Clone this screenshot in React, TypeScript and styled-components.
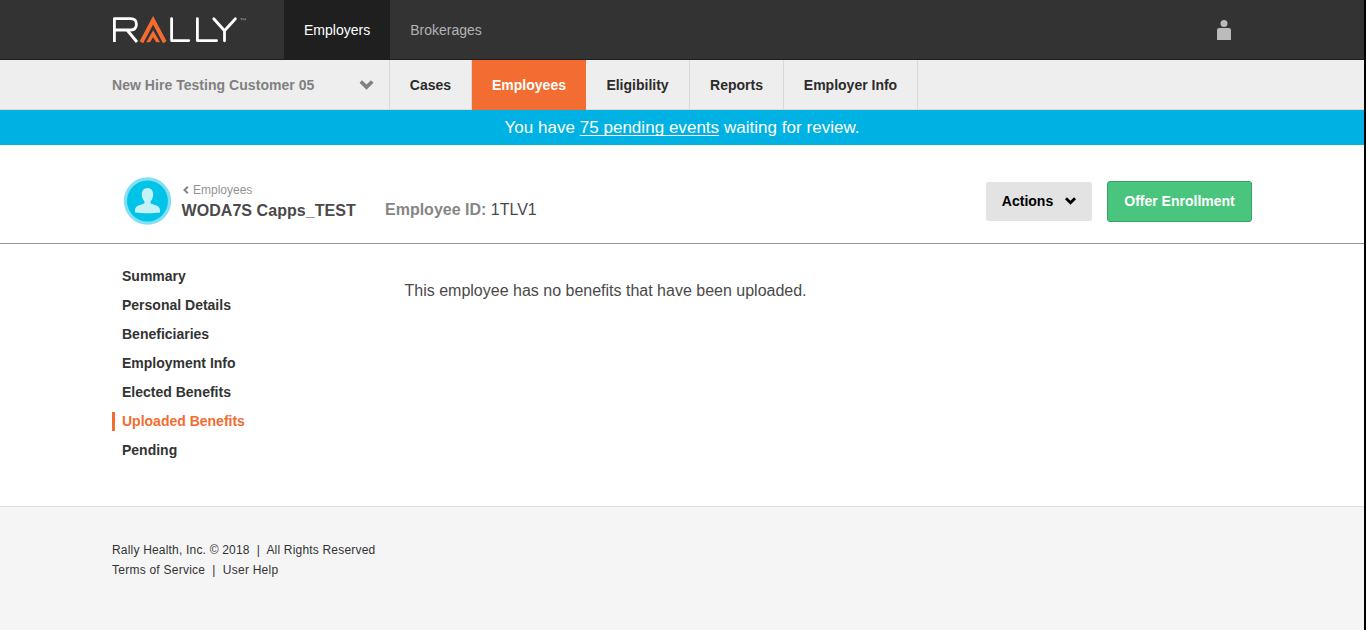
import React from "react";
import styled, { createGlobalStyle } from "styled-components";

const GlobalStyle = createGlobalStyle`
  *, *::before, *::after { box-sizing: border-box; }
  body {
    margin: 0;
    background: #fff;
    color: #333;
    font-family: "Liberation Sans", Arial, Helvetica, sans-serif;
    font-size: 14px;
  }
  a { color: inherit; text-decoration: none; }
  svg { display: block; }
`;

const Page = styled.div`
  display: flex;
  flex-direction: column;
  height: 630px;
  border-right: 2px solid #000;
  overflow: hidden;
`;

const TopBar = styled.header`
  display: flex;
  flex: none;
  height: 60px;
  padding-left: 112px;
  background: #333;
  border-bottom: 1px solid #1f1f1f;
`;

const Brand = styled.a`
  width: 172px;
  padding-top: 16px;
`;

const TopLink = styled.a<{ $active?: boolean }>`
  padding: 0 20px;
  line-height: 60px;
  color: ${(p) => (p.$active ? "#fff" : "#b4b4b4")};
  background: ${(p) => (p.$active ? "#1f1f1f" : "transparent")};
`;

const Account = styled.a`
  margin: 20px 133px 0 auto;
`;

const SubNav = styled.nav`
  display: flex;
  flex: none;
  height: 50px;
  padding-left: 112px;
  background: #eee;
  box-shadow: inset 0 -1px #dcdcdc;
  font-weight: bold;
  line-height: 51px;
`;

const CustomerPicker = styled.div`
  display: flex;
  justify-content: space-between;
  align-items: center;
  width: 278px;
  padding-right: 15px;
  border-right: 1px solid #d8d8d8;
  color: #808080;
  letter-spacing: 0.04px;
`;

const Tab = styled.a<{ $active?: boolean; $width: number }>`
  width: ${(p) => p.$width}px;
  text-align: center;
  color: ${(p) => (p.$active ? "#fff" : "#2b2b2b")};
  background: ${(p) => (p.$active ? "#f36c32" : "transparent")};
  border-right: ${(p) => (p.$active ? "0" : "1px solid #d8d8d8")};
`;

const Banner = styled.div`
  flex: none;
  height: 35px;
  background: #00b2e3;
  color: #fff;
  font-size: 17px;
  letter-spacing: 0.03px;
  line-height: 35px;
  text-align: center;

  a { text-decoration: underline; text-decoration-thickness: 1px; text-underline-offset: 2px; text-decoration-skip-ink: none; }
`;

const EmployeeHeader = styled.section`
  display: flex;
  flex: none;
  height: 99px;
  padding: 32px 112px 0 123px;
  border-bottom: 1px solid #949494;
`;

const Identity = styled.div`
  width: 214px;
  padding: 5px 0 0 10px;
`;

const BackLink = styled.a`
  display: flex;
  align-items: center;
  gap: 4px;
  height: 16px;
  padding-left: 2px;
  color: #949494;
  font-size: 12px;
`;

const EmployeeName = styled.h1`
  margin: 0;
  padding: 3px 0 0 0.5px;
  color: #4a4a4a;
  font-size: 16px;
  letter-spacing: 0.06px;
  line-height: 20px;
  white-space: nowrap;
`;

const EmployeeId = styled.div`
  padding-top: 23px;
  color: #4a4a4a;
  font-size: 16px;
  line-height: 20px;

  b { color: #868686; }
`;

const HeaderActions = styled.div`
  display: flex;
  align-items: flex-start;
  gap: 15px;
  margin-left: auto;
  padding-top: 4px;
`;

const Button = styled.button<{ $primary?: boolean }>`
  display: flex;
  align-items: center;
  justify-content: center;
  gap: 12px;
  width: ${(p) => (p.$primary ? 145 : 106)}px;
  height: ${(p) => (p.$primary ? 41 : 39)}px;
  margin-top: ${(p) => (p.$primary ? 0 : 1)}px;
  padding: 0 0 2px;
  border: ${(p) => (p.$primary ? "1px solid #36a365" : "0")};
  border-radius: 3px;
  background: ${(p) => (p.$primary ? "#4ac57e" : "#e3e3e3")};
  color: ${(p) => (p.$primary ? "#fff" : "#000")};
  font: bold 14px "Liberation Sans", Arial, sans-serif;
`;

const Content = styled.main`
  display: flex;
  flex: none;
  height: 262px;
  padding: 23px 112px 0;
`;

const SideNav = styled.nav`
  display: flex;
  flex-direction: column;
  gap: 10px;
  width: 292.5px;
`;

const SideLink = styled.a<{ $active?: boolean }>`
  height: 19px;
  padding-left: 7px;
  border-left: 3px solid ${(p) => (p.$active ? "#f36c32" : "transparent")};
  color: ${(p) => (p.$active ? "#f36c32" : "#333")};
  font-weight: bold;
  line-height: 19px;
`;

const Message = styled.p`
  margin: 14px 0 0;
  color: #4a4a4a;
  font-size: 16px;
  line-height: 20px;
`;

const Footer = styled.footer`
  flex: 1;
  padding: 33px 112px 0;
  background: #f5f5f5;
  border-top: 1px solid #dedede;
  color: #333;
  font-size: 12px;
  line-height: 20px;
  white-space: pre;
`;

const FooterLine = styled.div<{ $tracking: number }>`
  letter-spacing: ${(p) => p.$tracking}px;
`;

const Chevron = ({ width, height }: { width: number; height: number }) => (
  <svg width={width} height={height} viewBox="0 0 14 10">
    <path d="M0 2.8 2.5 0.3 7 4.6 11.5 0.3 14 2.8 7 9.7Z" fill="currentColor" />
  </svg>
);

const RallyLogo = () => (
  <svg width="136" height="28" viewBox="0 0 136 28" fill="none">
    <g stroke="#fff" strokeWidth="2.8" strokeLinejoin="round">
      <path d="M2.4 26V2.7H18.5C23 2.700 24.400 4.700 24.400 8.300S23 14 18.500 14H2.400M15 14 25 26" />
      <path d="M59.600 2.600V24.600H76.800M85.400 2.600V24.600H104.600" strokeLinecap="round" />
      <path d="M101.800 2.800 112.500 14.800 123.400 2.800M112.500 14.800V24.800" strokeLinecap="round" />
    </g>
    <path d="M29.400 26.200 41.100 4.200 52.800 26.200" stroke="#f36c32" strokeWidth="4" />
    <path d="M34.300 26.200 41.100 14.200 48 26.200H44.300L41.100 21.300 38 26.200Z" fill="#f36c32" />
    <path d="M128.500 2.600H130.700M129.600 2.600V4.200M131.800 4.200V2.600L132.600 3.600 133.400 2.600V4.200" stroke="#999" strokeWidth=".7" />
  </svg>
);

const PersonIcon = () => (
  <svg width="14" height="20" viewBox="0 0 14 20" fill="#bbb">
    <circle cx="7" cy="3.5" r="3.5" />
    <path d="M0 20V10.2Q0 8 2.2 8H11.8Q14 8 14 10.2V20Z" />
  </svg>
);

const Avatar = () => (
  <svg width="48" height="48" viewBox="0 0 48 48">
    <circle cx="24.500" cy="24" r="23.700" fill="#80dff2" />
    <circle cx="24.500" cy="24" r="20.500" fill="#00c3e8" />
    <path
      d="M24.500 11C28.200 11 30.200 13.800 30.200 17.300 30.200 20.500 29 23 27.600 24.200V26.600C32.500 28.400 37 28.700 37 33.500V35.500C30 36.500 19 36.500 12 35.500V33.500C12 28.700 16.500 28.400 21.400 26.600V24.200C20 23 18.800 20.500 18.800 17.300 18.800 13.800 20.800 11 24.500 11Z"
      fill="#c5f1f9"
    />
  </svg>
);

const BackIcon = () => (
  <svg width="6" height="8" viewBox="0 0 6 8" fill="none">
    <path d="M4.800.8 1.500 4 4.800 7.200" stroke="#868686" strokeWidth="2" />
  </svg>
);

const tabs = [
  { label: "Cases", width: 82 },
  { label: "Employees", width: 114, active: true },
  { label: "Eligibility", width: 104 },
  { label: "Reports", width: 94 },
  { label: "Employer Info", width: 134 },
];

const sections = [
  "Summary",
  "Personal Details",
  "Beneficiaries",
  "Employment Info",
  "Elected Benefits",
  "Uploaded Benefits",
  "Pending",
];

export default function App() {
  return (
    <>
      <GlobalStyle />
      <Page>
        <TopBar>
          <Brand aria-label="Rally"><RallyLogo /></Brand>
          <TopLink $active>Employers</TopLink>
          <TopLink>Brokerages</TopLink>
          <Account aria-label="Account"><PersonIcon /></Account>
        </TopBar>
        <SubNav>
          <CustomerPicker>
            New Hire Testing Customer 05
            <Chevron width={15} height={10} />
          </CustomerPicker>
          {tabs.map((t) => (
            <Tab key={t.label} $active={t.active} $width={t.width}>{t.label}</Tab>
          ))}
        </SubNav>
        <Banner>
          You have <a>75 pending events</a> waiting for review.
        </Banner>
        <EmployeeHeader>
          <Avatar />
          <Identity>
            <BackLink><BackIcon />Employees</BackLink>
            <EmployeeName>WODA7S Capps_TEST</EmployeeName>
          </Identity>
          <EmployeeId><b>Employee ID:</b> 1TLV1</EmployeeId>
          <HeaderActions>
            <Button>Actions <Chevron width={11} height={8} /></Button>
            <Button $primary>Offer Enrollment</Button>
          </HeaderActions>
        </EmployeeHeader>
        <Content>
          <SideNav>
            {sections.map((s) => (
              <SideLink key={s} $active={s === "Uploaded Benefits"}>{s}</SideLink>
            ))}
          </SideNav>
          <Message>This employee has no benefits that have been uploaded.</Message>
        </Content>
        <Footer>
          <FooterLine $tracking={0.19}>{"Rally Health, Inc. © 2018  |  All Rights Reserved"}</FooterLine>
          <FooterLine $tracking={0.24}>{"Terms of Service  |  User Help"}</FooterLine>
        </Footer>
      </Page>
    </>
  );
}
